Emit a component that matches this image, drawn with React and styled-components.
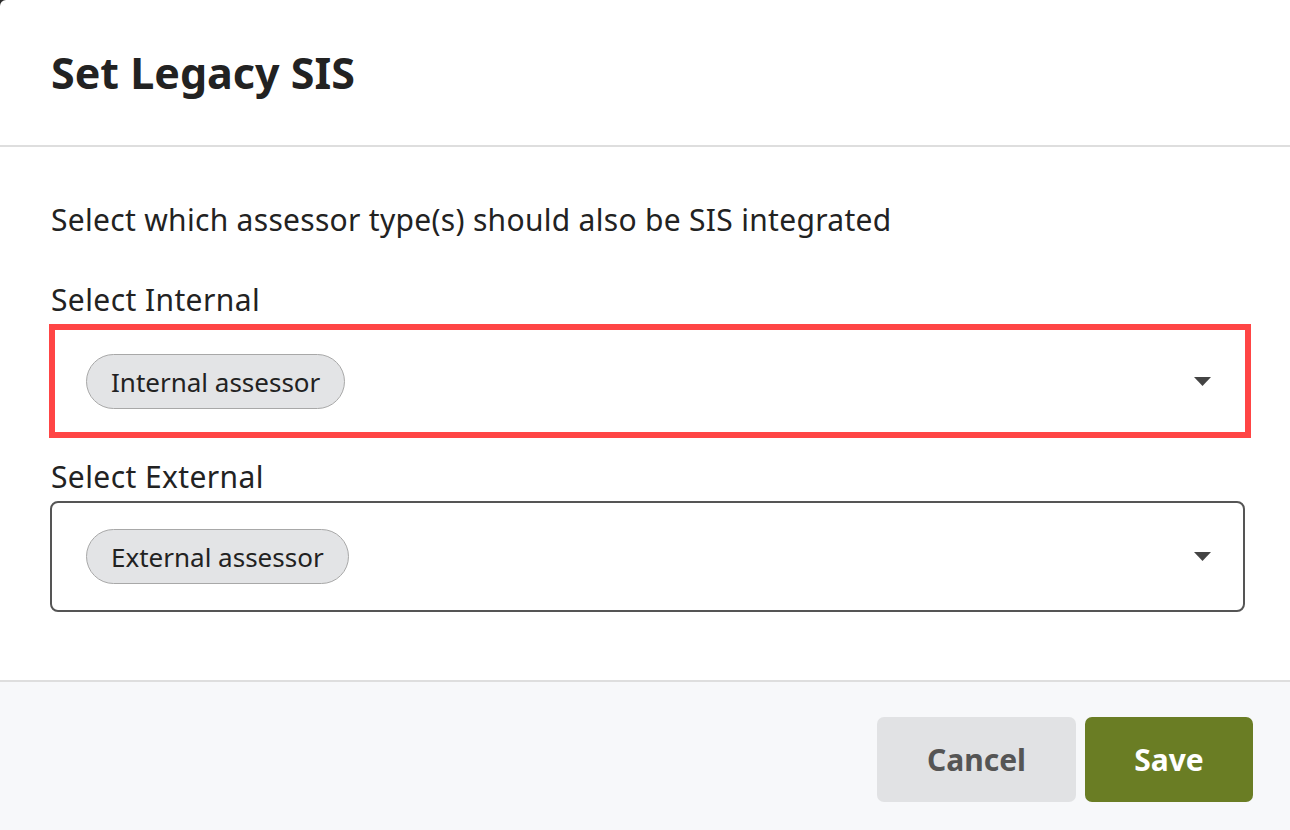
import React from 'react'
import styled, { createGlobalStyle } from 'styled-components'

const GlobalStyle = createGlobalStyle`
  html, body {
    margin: 0;
    padding: 0;
    background: #2b2b2b;
  }
  body {
    font-family: "Noto Sans", "Open Sans", sans-serif;
    color: #222;
  }
`

const Modal = styled.div`
  width: 1290px;
  height: 830px;
  background: #fff;
  border-top-left-radius: 6px;
  display: flex;
  flex-direction: column;
  overflow: hidden;
`

const Header = styled.div`
  height: 145px;
  display: flex;
  align-items: center;
  padding: 0 51px;
  border-bottom: 2px solid #dedede;
`

const Title = styled.h1`
  margin: 0;
  font-size: 43px;
  font-weight: 700;
  color: #222;
`

const Body = styled.div`
  padding: 53px 45px 68px 50px;
  display: flex;
  flex-direction: column;
`

const Intro = styled.p`
  margin: 0 0 40px 1px;
  font-size: 30px;
  letter-spacing: 0.3px;
  line-height: 40px;
`

const Label = styled.label`
  display: block;
  margin-left: 1px;
  font-size: 30px;
  letter-spacing: 0.4px;
  line-height: 40px;
`

const Field = styled.div`
  position: relative;
  margin: ${p => p.$first ? '6px 0 20px' : '4px 0 0'};
  display: flex;
  align-items: center;
  justify-content: space-between;
  padding: 26px 32px 26px 34px;
  border: 2px solid ${p => p.$highlighted ? 'transparent' : '#555'};
  border-radius: 8px;

  ${p => p.$highlighted && `
    &::after {
      content: '';
      position: absolute;
      top: -4px;
      bottom: -3px;
      left: -3px;
      right: -8px;
      border: 6px solid #ff4545;
      pointer-events: none;
    }
  `}
`

const Chip = styled.span`
  height: 55px;
  box-sizing: border-box;
  display: inline-flex;
  align-items: center;
  padding: 0 24px;
  background: #e3e4e6;
  border: 1.5px solid #a8a8a8;
  border-radius: 28px;
  font-size: 26px;
  color: #222;
`

const Caret = styled.svg`
  width: 17px;
  height: 9px;
  fill: #444;
`

const Footer = styled.div`
  flex: 1;
  background: #f7f8fa;
  border-top: 2px solid #dedede;
  display: flex;
  justify-content: flex-end;
  align-items: flex-start;
  gap: 9px;
  padding: 35px 37px 0 0;
`

const Button = styled.button`
  height: 85px;
  width: ${p => p.$width}px;
  border: none;
  border-radius: 7px;
  font-family: inherit;
  font-size: 30px;
  font-weight: 700;
  cursor: pointer;
  background: ${p => p.$primary ? '#6a7d24' : '#e1e2e4'};
  color: ${p => p.$primary ? '#fff' : '#555'};
`

const Arrow = () => (
  <Caret viewBox="0 0 17 9">
    <path d="M0 0 L17 0 L8.5 9 Z" />
  </Caret>
)

function App() {
  return (
    <>
      <GlobalStyle />
      <Modal>
        <Header>
          <Title>Set Legacy SIS</Title>
        </Header>
        <Body>
          <Intro>Select which assessor type(s) should also be SIS integrated</Intro>
          <Label>Select Internal</Label>
          <Field $first $highlighted>
            <Chip>Internal assessor</Chip>
            <Arrow />
          </Field>
          <Label>Select External</Label>
          <Field>
            <Chip>External assessor</Chip>
            <Arrow />
          </Field>
        </Body>
        <Footer>
          <Button $width={199}>Cancel</Button>
          <Button $primary $width={168}>Save</Button>
        </Footer>
      </Modal>
    </>
  )
}

export default App
